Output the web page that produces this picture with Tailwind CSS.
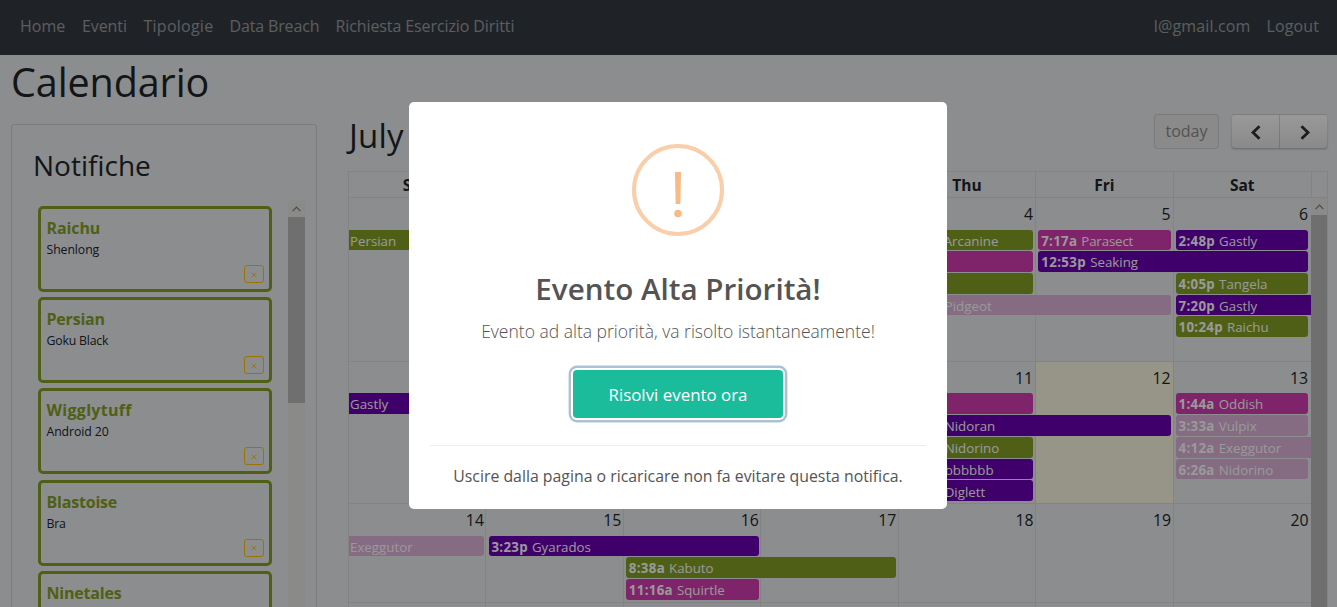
<!DOCTYPE html>
<html lang="it">
<head>
<meta charset="utf-8">
<title>Calendario</title>
<script src="https://cdn.jsdelivr.net/npm/@tailwindcss/browser@4"></script>
</head>
<body class="bg-[#e9ecef]">
<div class="relative h-[607px] w-[1337px] overflow-hidden bg-[#e9ecef] font-['Open_Sans','Noto_Sans',sans-serif] text-[#212529]">

<nav class="flex h-[55px] items-start justify-between bg-[#343a40] pl-[20px] pr-[18px] pt-[14px] text-[16px] leading-[24px] text-white/50">
  <div class="flex whitespace-nowrap">
    <a class="w-[62px]">Home</a>
    <a class="w-[61.5px] tracking-[-0.1px]">Eventi</a>
    <a class="w-[86px] tracking-[0.25px]">Tipologie</a>
    <a class="w-[106px] tracking-[-0.15px]">Data Breach</a>
    <a class="tracking-[-0.1px]">Richiesta Esercizio Diritti</a>
  </div>
  <div class="flex gap-[16px] whitespace-nowrap">
    <a class="tracking-[0.15px]">l@gmail.com</a>
    <a class="tracking-[0.1px]">Logout</a>
  </div>
</nav>

<h1 class="h-[69px] pl-[11px] pt-[3px] text-[39.5px] leading-[49px] tracking-[-0.1px]">Calendario</h1>

<div class="flex items-start">
  <!-- Notifications -->
  <section class="ml-[11px] h-[483px] w-[306px] shrink-0 overflow-hidden rounded-t-[4px] border border-b-0 border-black/12">
    <h2 class="h-[61px] pl-[21px] pt-[20px] text-[28px] leading-[40px]">Notifiche</h2>
    <div class="mt-[14px] flex h-[407px] overflow-hidden">
      <ul class="ml-[26px] mt-[6px] flex w-[234px] flex-col gap-[5.2px]">
        <li class="flex h-[86px] shrink-0 flex-col rounded-[5px] border-3 border-[#84a025] pl-[5.5px] pt-[8px]">
          <b class="text-[16px] leading-[22px] tracking-[-0.1px] text-[#84a025]">Raichu</b>
          <span class="pt-px text-[12.3px] leading-[20px] tracking-[-0.1px]">Shenlong</span>
          <button class="ml-auto mr-[5px] mt-[5px] flex h-[18px] w-[20px] items-center justify-center rounded-[3px] border border-[#ffc107]"><svg class="mt-[1px] h-[6px] w-[6px]" viewBox="0 0 6 6" stroke="#ffc107" stroke-width=".9"><path d="M.7.7 5.3 5.3M5.3.7.7 5.3"/></svg></button>
        </li>
        <li class="flex h-[86px] shrink-0 flex-col rounded-[5px] border-3 border-[#84a025] pl-[5.5px] pt-[8px]">
          <b class="text-[16px] leading-[22px] tracking-[-0.2px] text-[#84a025]">Persian</b>
          <span class="pt-px text-[12.3px] leading-[20px] tracking-[-0.2px]">Goku Black</span>
          <button class="ml-auto mr-[5px] mt-[5px] flex h-[18px] w-[20px] items-center justify-center rounded-[3px] border border-[#ffc107]"><svg class="mt-[1px] h-[6px] w-[6px]" viewBox="0 0 6 6" stroke="#ffc107" stroke-width=".9"><path d="M.7.7 5.3 5.3M5.3.7.7 5.3"/></svg></button>
        </li>
        <li class="flex h-[86px] shrink-0 flex-col rounded-[5px] border-3 border-[#84a025] pl-[5.5px] pt-[8px]">
          <b class="text-[16px] leading-[22px] tracking-[0.3px] text-[#84a025]">Wigglytuff</b>
          <span class="pt-px text-[12.3px] leading-[20px] tracking-[-0.1px]">Android 20</span>
          <button class="ml-auto mr-[5px] mt-[5px] flex h-[18px] w-[20px] items-center justify-center rounded-[3px] border border-[#ffc107]"><svg class="mt-[1px] h-[6px] w-[6px]" viewBox="0 0 6 6" stroke="#ffc107" stroke-width=".9"><path d="M.7.7 5.3 5.3M5.3.7.7 5.3"/></svg></button>
        </li>
        <li class="flex h-[86px] shrink-0 flex-col rounded-[5px] border-3 border-[#84a025] pl-[5.5px] pt-[8px]">
          <b class="text-[16px] leading-[22px] tracking-[-0.2px] text-[#84a025]">Blastoise</b>
          <span class="pt-px text-[12.3px] leading-[20px] tracking-[-0.2px]">Bra</span>
          <button class="ml-auto mr-[5px] mt-[5px] flex h-[18px] w-[20px] items-center justify-center rounded-[3px] border border-[#ffc107]"><svg class="mt-[1px] h-[6px] w-[6px]" viewBox="0 0 6 6" stroke="#ffc107" stroke-width=".9"><path d="M.7.7 5.3 5.3M5.3.7.7 5.3"/></svg></button>
        </li>
        <li class="flex h-[86px] shrink-0 flex-col rounded-[5px] border-3 border-[#84a025] pl-[5.5px] pt-[8px]">
          <b class="text-[16px] leading-[22px] tracking-[-0.2px] text-[#84a025]">Ninetales</b>
        </li>
      </ul>
      <div class="ml-[16px] w-[17px] bg-[#e7e6e5]">
        <div class="flex h-[17px] items-center justify-center"><svg class="h-[6px] w-[9px]" viewBox="0 0 9 6" fill="none" stroke="#7c7c7c" stroke-width="1.2"><path d="M.6 5.2 4.5 1.2 8.4 5.2"/></svg></div>
        <div class="h-[186px] bg-[#b9b9b9]"></div>
      </div>
    </div>
  </section>

  <!-- Calendar -->
  <section class="ml-[31px] mt-[-10px] w-[980px]">
    <div class="flex h-[57px] items-start justify-between">
      <h2 class="pl-px text-[33px] leading-[43px] tracking-[0.2px]">July 2019</h2>
      <div class="flex">
        <button class="h-[35px] w-[65px] rounded-[4px] border border-black/10 bg-[#e6e6e6] text-[16px] leading-[33px] text-[#8a8b8b]">today</button>
        <div class="ml-[12px] flex h-[35px] w-[97px] rounded-[4px] border border-black/10 border-b-black/25 bg-linear-to-b from-white to-[#e6e6e6] shadow-[0_1px_2px_rgba(0,0,0,0.12)]">
          <button class="flex w-[48px] items-center justify-center border-r border-black/15"><svg class="mr-[1px] mt-[2px] h-[15px] w-[11px]" viewBox="0 0 11 15" fill="none" stroke="#333" stroke-width="2.8"><path d="M9.5 1.2 3 7.5 9.5 13.8"/></svg></button>
          <button class="flex flex-1 items-center justify-center"><svg class="ml-[3px] mt-[2px] h-[15px] w-[11px]" viewBox="0 0 11 15" fill="none" stroke="#333" stroke-width="2.8"><path d="M1.5 1.2 8 7.5 1.5 13.8"/></svg></button>
        </div>
      </div>
    </div>

    <div class="border border-[#dadada]">
      <div class="flex h-[26px] border-b border-[#dadada] text-center text-[15.5px] font-bold leading-[27px]">
        <div class="grid w-[963px] grid-cols-7 divide-x divide-[#dadada] border-r border-[#dadada]">
          <div>Sun</div><div>Mon</div><div>Tue</div><div>Wed</div><div>Thu</div><div>Fri</div><div>Sat</div>
        </div>
      </div>
      <div class="flex h-[409px] overflow-hidden">
        <div class="w-[962px] shrink-0 text-[13.3px] leading-[20px] text-white">

          <!-- Week 1 -->
          <div class="relative h-[164px] border-b border-[#dadada]">
            <div class="absolute inset-0 grid grid-cols-7 divide-x divide-[#dadada]"><i></i><i></i><i></i><i></i><i></i><i></i><i></i></div>
            <div class="relative grid h-[31.8px] grid-cols-7 pt-[4px] text-right text-[15.8px] leading-[24px] text-[#212529] *:pr-[3px]">
              <span>30</span><span>1</span><span>2</span><span>3</span><span>4</span><span>5</span><span>6</span>
            </div>
            <div class="relative grid auto-rows-[21.6px] grid-cols-7 whitespace-nowrap *:mb-[1px] *:overflow-hidden *:pt-px">
              <div class="col-span-2 col-start-1 row-start-1 mr-[3px] rounded-r-[3px] bg-[#84a025] pl-px">Persian</div>
              <div class="col-start-5 row-start-1 ml-[2px] mr-[3px] rounded-[3px] bg-[#84a025] pl-[3px]"><b class="inline-block w-[40px]">9:20a</b>Arcanine</div>
              <div class="col-span-2 col-start-4 row-start-2 ml-[2px] mr-[3px] rounded-[3px] bg-[#d43cb2]"></div>
              <div class="col-span-2 col-start-4 row-start-3 ml-[2px] mr-[3px] rounded-[3px] bg-[#84a025]"></div>
              <div class="col-span-2 col-start-5 row-start-4 ml-[2px] mr-[3px] rounded-[3px] bg-[#deb4da] pl-[3px]"><b class="inline-block w-[41px]">3:15p</b>Pidgeot</div>
              <div class="col-start-6 row-start-1 ml-[2px] mr-[3px] rounded-[3px] bg-[#d43cb2] pl-[3px]"><b class="mr-[4px] tracking-[0.3px]">7:17a</b><span class="tracking-[-0.15px]">Parasect</span></div>
              <div class="col-span-2 col-start-6 row-start-2 ml-[2px] mr-[3px] rounded-[3px] bg-[#6c00b2] pl-[3px]"><b class="mr-[4px] tracking-[0.4px]">12:53p</b>Seaking</div>
              <div class="col-start-7 row-start-1 ml-[2px] mr-[3px] rounded-[3px] bg-[#6c00b2] pl-[3px]"><b class="mr-[4px] tracking-[0.3px]">2:48p</b>Gastly</div>
              <div class="col-start-7 row-start-3 ml-[2px] mr-[3px] rounded-[3px] bg-[#84a025] pl-[3px]"><b class="mr-[4px] tracking-[0.3px]">4:05p</b>Tangela</div>
              <div class="col-start-7 row-start-4 ml-[2px] rounded-l-[3px] bg-[#6c00b2] pl-[3px]"><b class="mr-[4px] tracking-[0.3px]">7:20p</b>Gastly</div>
              <div class="col-start-7 row-start-5 ml-[2px] mr-[3px] rounded-[3px] bg-[#84a025] pl-[3px]"><b class="mr-[4px] tracking-[0.3px]">10:24p</b>Raichu</div>
            </div>
          </div>

          <!-- Week 2 -->
          <div class="relative h-[142px] border-b border-[#dadada]">
            <div class="absolute inset-0 grid grid-cols-7 divide-x divide-[#dadada]"><i></i><i></i><i></i><i></i><i></i><i class="bg-[#fcf8e3]"></i><i></i></div>
            <div class="relative grid h-[31.2px] grid-cols-7 pt-[4px] text-right text-[15.8px] leading-[24px] text-[#212529] *:pr-[3px]">
              <span>7</span><span>8</span><span>9</span><span>10</span><span>11</span><span>12</span><span>13</span>
            </div>
            <div class="relative grid auto-rows-[21.8px] grid-cols-7 whitespace-nowrap *:mb-[1px] *:overflow-hidden *:pt-[1.3px]">
              <div class="col-start-1 row-start-1 mr-[3px] rounded-r-[3px] bg-[#6c00b2] pl-px">Gastly</div>
              <div class="col-span-2 col-start-4 row-start-1 ml-[2px] mr-[3px] rounded-[3px] bg-[#d43cb2]"></div>
              <div class="col-span-2 col-start-5 row-start-2 ml-[2px] mr-[3px] rounded-[3px] bg-[#6c00b2] pl-[3px]"><b class="inline-block w-[41px]">2:10a</b>Nidoran</div>
              <div class="col-start-5 row-start-3 ml-[2px] mr-[3px] rounded-[3px] bg-[#84a025] pl-[3px]"><b class="inline-block w-[41px]">4:31a</b>Nidorino</div>
              <div class="col-start-5 row-start-4 ml-[2px] mr-[3px] rounded-[3px] bg-[#6c00b2] pl-[3px]"><b class="inline-block w-[41px]">5:00a</b>bbbbbb</div>
              <div class="col-start-5 row-start-5 ml-[2px] mr-[3px] rounded-[3px] bg-[#6c00b2] pl-[3px]"><b class="inline-block w-[41px]">8:12p</b>Diglett</div>
              <div class="col-start-7 row-start-1 ml-[2px] mr-[3px] rounded-[3px] bg-[#d43cb2] pl-[3px]"><b class="mr-[4px] tracking-[0.3px]">1:44a</b>Oddish</div>
              <div class="col-start-7 row-start-2 ml-[2px] mr-[3px] rounded-[3px] bg-[#deb4da] pl-[3px]"><b class="mr-[4px] tracking-[0.3px]">3:33a</b>Vulpix</div>
              <div class="col-start-7 row-start-3 ml-[2px] rounded-l-[3px] bg-[#deb4da] pl-[3px]"><b class="mr-[4px] tracking-[0.3px]">4:12a</b>Exeggutor</div>
              <div class="col-start-7 row-start-4 ml-[2px] mr-[3px] rounded-[3px] bg-[#deb4da] pl-[3px]"><b class="mr-[4px] tracking-[0.3px]">6:26a</b>Nidorino</div>
            </div>
          </div>

          <!-- Week 3 -->
          <div class="relative h-[99px] border-b border-[#dadada]">
            <div class="absolute inset-0 grid grid-cols-7 divide-x divide-[#dadada]"><i></i><i></i><i></i><i></i><i></i><i></i><i></i></div>
            <div class="relative grid h-[31.8px] grid-cols-7 pt-[4px] text-right text-[15.8px] leading-[24px] text-[#212529] *:pr-[2.5px]">
              <span>14</span><span>15</span><span>16</span><span>17</span><span>18</span><span>19</span><span>20</span>
            </div>
            <div class="relative grid auto-rows-[21.6px] grid-cols-7 whitespace-nowrap *:mb-[1px] *:overflow-hidden *:pt-px">
              <div class="col-start-1 row-start-1 mr-[2px] rounded-r-[3px] bg-[#deb4da] pl-px">Exeggutor</div>
              <div class="col-span-2 col-start-2 row-start-1 ml-[2.6px] mr-[2px] rounded-[3px] bg-[#6c00b2] pl-[2.4px]"><b class="mr-[4px] tracking-[0.3px]">3:23p</b>Gyarados</div>
              <div class="col-span-2 col-start-3 row-start-2 ml-[2px] mr-[3px] rounded-[3px] bg-[#84a025] pl-[3px]"><b class="mr-[4px] tracking-[0.3px]">8:38a</b>Kabuto</div>
              <div class="col-start-3 row-start-3 ml-[2px] mr-[2px] rounded-[3px] bg-[#d43cb2] pl-[3px]"><b class="mr-[4px] tracking-[0.3px]">11:16a</b>Squirtle</div>
            </div>
          </div>

          <!-- Week 4 -->
          <div class="grid h-[4px] grid-cols-7 divide-x divide-[#dadada]"><i></i><i></i><i></i><i></i><i></i><i></i><i></i></div>
        </div>

        <div class="flex w-[16px] flex-col bg-[#e7e6e5]">
          <div class="flex h-[17px] items-center justify-center"><svg class="h-[6px] w-[9px]" viewBox="0 0 9 6" fill="none" stroke="#7c7c7c" stroke-width="1.2"><path d="M.6 5.2 4.5 1.2 8.4 5.2"/></svg></div>
          <div class="flex-1 bg-[#b9b9b9]"></div>
        </div>
      </div>
    </div>
  </section>
</div>

<!-- Alert dialog over the dimmed page -->
<div class="absolute inset-0 bg-black/40 pl-[409px] pt-[102px]">
  <div class="flex h-[407px] w-[538px] flex-col items-center rounded-[5px] bg-white pt-[42px] text-[#545454]">
    <svg class="h-[92px] w-[92px] shrink-0" viewBox="0 0 92 92">
      <circle cx="46" cy="46" r="44" fill="none" stroke="#facea8" stroke-width="4"/>
      <path d="M43 28h6l-.6 32h-4.8z" fill="#f8bb86"/>
      <circle cx="46" cy="69.5" r="3.8" fill="#f8bb86"/>
    </svg>
    <h2 class="mt-[33px] text-[29.6px] font-semibold leading-[40px]">Evento Alta Priorità!</h2>
    <p class="mt-[9px] text-[17.5px] font-light leading-[26px]">Evento ad alta priorità, va risolto istantaneamente!</p>
    <button class="mt-[26px] h-[48px] w-[210px] shrink-0 rounded-[4px] bg-[#1abc9c] pt-px text-[16.9px] leading-[48px] text-white shadow-[0_0_0_2px_#fff,0_0_0_4.4px_#adc1d5]">Risolvi evento ora</button>
    <div class="mt-[27px] w-[496px] border-t border-[#eee] pt-[18px] text-center text-[15.85px] leading-[25px]">Uscire dalla pagina o ricaricare non fa evitare questa notifica.</div>
  </div>
</div>
</div>
</body>
</html>
